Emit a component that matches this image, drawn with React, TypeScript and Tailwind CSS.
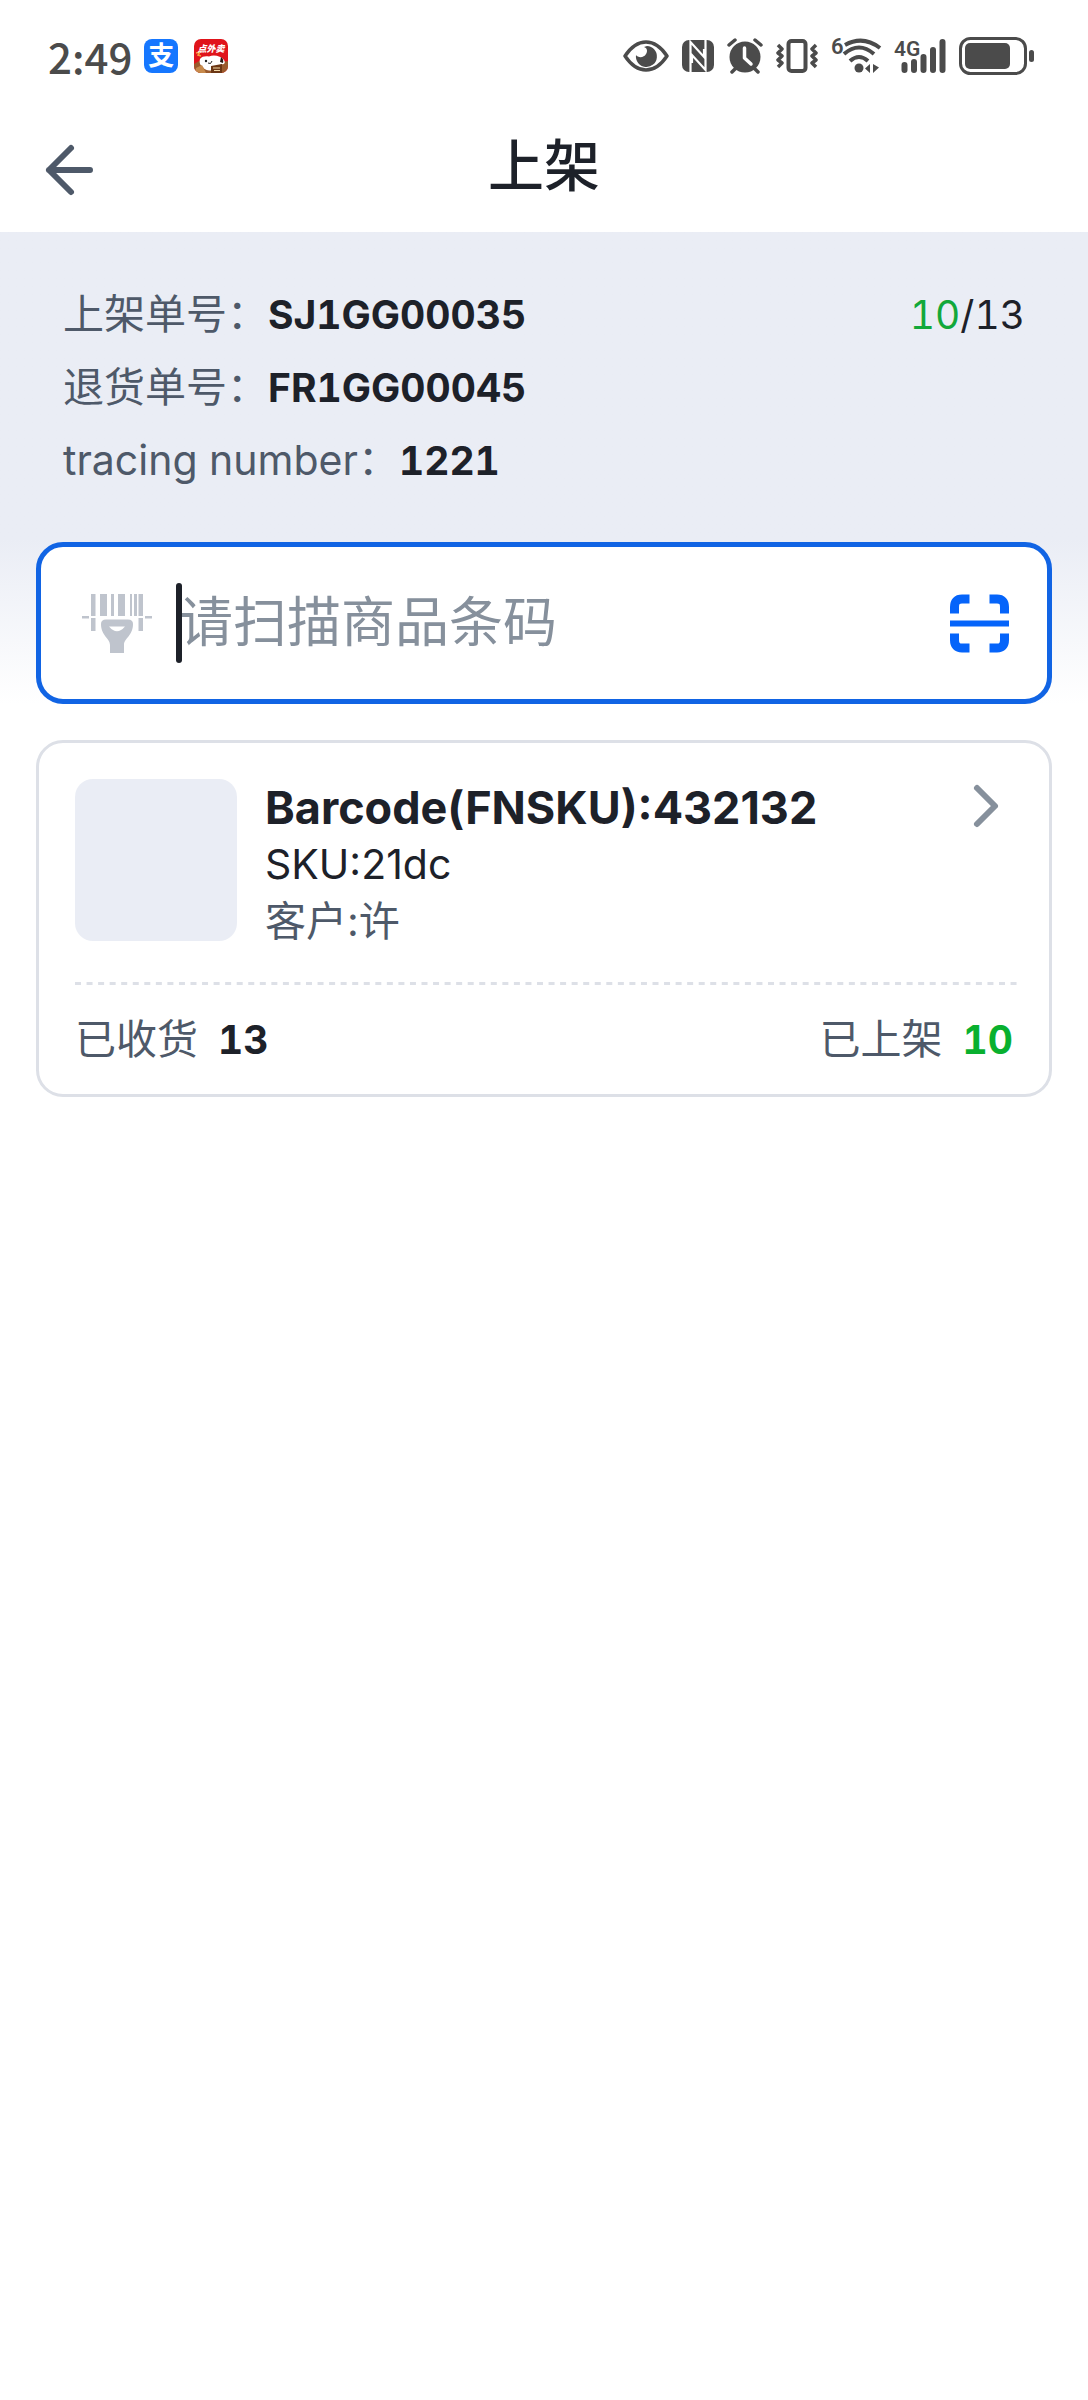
import React from 'react';

interface InfoRow {
    label: string;
    value: string;
}

interface PutawayItem {
    barcode: string;
    sku: string;
    customer: string;
    received: number;
    shelved: number;
}

const ORDER_INFO: InfoRow[] = [
    { label: '上架单号', value: 'SJ1GG00035' },
    { label: '退货单号', value: 'FR1GG00045' },
    { label: 'tracing number', value: '1221' },
];

const ITEMS: PutawayItem[] = [
    { barcode: '432132', sku: '21dc', customer: '许', received: 13, shelved: 10 },
];

// --- Status bar icons ---
const JdIcon = () => (
    <svg width="34" height="34" viewBox="0 0 34 34" aria-hidden="true">
        <defs>
            <clipPath id="jd-clip">
                <rect width="34" height="34" rx="7" />
            </clipPath>
        </defs>
        <g clipPath="url(#jd-clip)">
            <rect width="34" height="34" fill="#e0141b" />
            <path d="M0 25 5 22 12 26 23 24 34 22V34H0Z" fill="#9a5a2c" />
            <path d="M6 20C8 17 12 17 15 17.500C20 15.500 27 17 30 21C32 24 30 26 27 25L24 29C20 33 10 32 9 28C6 27 5 23 6 20Z" fill="#fff" />
            <path d="M2 14 6 13 4 16 7 17" fill="none" stroke="#f7a13a" strokeWidth="1.500" />
            <circle cx="12" cy="22" r="1.200" fill="#222" />
            <path d="M14 24Q17 26 18 22" fill="none" stroke="#222" strokeWidth="1" />
            <path d="M27 18Q30 20 29 24L26 23Z" fill="#2a1a14" />
            <path d="M17 27 28 25 28 34H17Z" fill="#6b3614" />
            <path d="M19 29H26M20 31.500H26" stroke="#f3d9a8" strokeWidth="1.200" />
            <path d="M2 29 8 26 12 34H1Z" fill="#c78a4c" />
        </g>
        <text x="17" y="13" textAnchor="middle" fontSize="9" fontWeight="900" fontStyle="italic" fill="#fff" fontFamily="'Noto Sans CJK SC', sans-serif">点外卖</text>
    </svg>
);

const EyeIcon = () => (
    <svg width="46" height="34" viewBox="0 0 46 34" aria-hidden="true">
        <path d="M2 17C8 8 15 3 23 3S38 8 44 17C38 26 31 31 23 31S8 26 2 17Z" fill="none" stroke="currentColor" strokeWidth="3.500" strokeLinejoin="round" />
        <path d="M24 7A10.500 10.500 0 1 1 13 16C15 19 21 19 23 15C25 12 24 9 21 8Z" fill="currentColor" />
    </svg>
);

const NfcIcon = () => (
    <svg width="32" height="34" viewBox="0 0 32 34" aria-hidden="true">
        <rect y="1" width="32" height="32" rx="7" fill="currentColor" />
        <path d="M8.500 33V3L22 18V10M23.500 1V31L10 16V24" fill="none" stroke="#fff" strokeWidth="2.200" />
    </svg>
);

const AlarmIcon = () => (
    <svg width="36" height="36" viewBox="0 0 36 36" aria-hidden="true">
        <circle cx="18" cy="19" r="15.500" fill="currentColor" />
        <path d="M2 7 8 2M34 7 28 2M5 34 9 30M31 34 27 30" stroke="currentColor" strokeWidth="3.500" strokeLinecap="round" />
        <path d="M17.500 10V20L24 26" fill="none" stroke="#fff" strokeWidth="3.500" strokeLinecap="round" strokeLinejoin="round" />
    </svg>
);

const VibrateIcon = () => (
    <svg width="42" height="36" viewBox="0 0 42 36" aria-hidden="true">
        <rect x="12.500" y="3" width="17" height="30" rx="3" fill="none" stroke="currentColor" strokeWidth="4" />
        <path d="M2 7 6 11 2 15 6 18 2 22 6 25 2 29M40 7 36 11 40 15 36 18 40 22 36 25 40 29" fill="none" stroke="currentColor" strokeWidth="3.500" strokeLinejoin="round" />
    </svg>
);

const WifiIcon = () => (
    <svg width="50" height="38" viewBox="0 0 50 38" className="overflow-visible" aria-hidden="true">
        <text x="0" y="17" fontSize="22" fontWeight="600" fill="currentColor" fontFamily="Roboto, sans-serif">6</text>
        <path d="M14 8Q32 -2 49 11M13 17Q28 4 43 17M19 24Q28 16 37 24" fill="none" stroke="currentColor" strokeWidth="4" />
        <circle cx="28" cy="31" r="4.500" fill="currentColor" />
        <path d="M39 27V36L34 31.500ZM42 27V36L48 30.500Z" fill="currentColor" />
    </svg>
);

const SignalIcon = () => (
    <svg width="52" height="38" viewBox="0 0 52 38" className="overflow-visible" aria-hidden="true">
        <text x="0" y="19" fontSize="21" fontWeight="600" fill="currentColor" fontFamily="Roboto, sans-serif">4G</text>
        <path d="M10.500 28V33M20 25V33M29.500 20V33M39 13V33M48.500 5V33" stroke="currentColor" strokeWidth="6" strokeLinecap="round" />
    </svg>
);

const BatteryIcon = () => (
    <svg width="76" height="38" viewBox="0 0 76 38" aria-hidden="true">
        <rect x="1.500" y="1.500" width="65" height="35" rx="10" fill="none" stroke="currentColor" strokeWidth="3" />
        <rect x="6" y="6" width="45" height="26" rx="5" fill="currentColor" />
        <rect x="70" y="13" width="5" height="12" rx="2.500" fill="currentColor" />
    </svg>
);

const StatusBar: React.FC = () => (
    <div className="flex h-28 items-center justify-between pl-12 pr-[53px] text-[#4b4b4b]">
        <div className="flex items-center">
            <span className="font-['Noto_Sans_CJK_SC',sans-serif] text-[42px] font-medium leading-[48px]">2:49</span>
            <span className="ml-3 flex size-[34px] items-center justify-center rounded-lg bg-[#1677ff] text-[26px] font-bold leading-[34px] text-white">支</span>
            <span className="ml-4">
                <JdIcon />
            </span>
        </div>
        <div className="flex items-center gap-[13px]">
            <EyeIcon />
            <NfcIcon />
            <AlarmIcon />
            <VibrateIcon />
            <WifiIcon />
            <SignalIcon />
            <BatteryIcon />
        </div>
    </div>
);

// --- Page icons ---
const BarcodeGunIcon = () => (
    <svg width="71" height="61" viewBox="0 0 71 61" fill="#bfc4cd" className="shrink-0" aria-hidden="true">
        <path d="M9 1h4.500v22H9zM18 1h7v22h-7zM29 1h3v22h-3zM36 1h7v22h-7zM48 1h2v22h-2zM52 1h3v22h-3zM56.500 1H61v22h-4.500zM9 25h4.500v13H9zM56.500 25H61v13h-4.500zM0 23h7v2.500H0zM63 23h7v2.500h-7z" />
        <path fillRule="evenodd" d="M24 26.500H46Q51 26.500 51 31C51 43 42 45 42 52V60H28V52C28 45 19 43 19 31Q19 26.500 24 26.500ZM27 33.500Q35 43 43 33.500Z" />
    </svg>
);

const ScanIcon = () => (
    <svg width="59" height="59" viewBox="0 0 59 59" fill="none" stroke="#0564fa" aria-hidden="true">
        <path d="M4.500 19.500V13Q4.500 5 12 5H19.500M39.500 5H47Q54.500 5 54.500 13V19.500M54.500 39.500V46Q54.500 54 47 54H39.500M19.500 54H12Q4.500 54 4.500 46V39.500" strokeWidth="9" />
        <path d="M0 29.500H59" strokeWidth="6" />
    </svg>
);

const NavBar: React.FC = () => (
    <header className="grid h-[120px] grid-cols-[1fr_auto_1fr] items-center px-[42px] pb-1">
        <button type="button" aria-label="返回" className="justify-self-start text-[#4e5969]">
            <svg width="54" height="54" viewBox="0 0 54 54" fill="none" stroke="currentColor" strokeWidth="6" strokeLinecap="round" strokeLinejoin="round" aria-hidden="true">
                <path d="M29 5 7 27 29 49M7 27H48" />
            </svg>
        </button>
        <h1 className="pb-2 text-[56px] font-medium leading-[72px]">上架</h1>
    </header>
);

const OrderSummary: React.FC<{ rows: InfoRow[]; done: number; total: number }> = ({ rows, done, total }) => (
    <div className="flex justify-between px-[27px] leading-[73px]">
        <dl>
            {rows.map((row) => (
                <div key={row.label} className="flex h-[73px] items-baseline">
                    <dt className="text-[41px] text-[#4e5969]">{row.label}：</dt>
                    <dd className="text-[39px] font-bold tabular-nums">{row.value}</dd>
                </div>
            ))}
        </dl>
        <p className="text-[39px] tabular-nums">
            <span className="text-[#12a83a]">{done}</span>/{total}
        </p>
    </div>
);

const ScanInput: React.FC = () => (
    <div className="mt-[45px] flex h-[162px] items-center rounded-[27px] border-[5px] border-[#1164e4] bg-white pl-[41px] pr-[38px]">
        <label htmlFor="barcode">
            <BarcodeGunIcon />
        </label>
        <div className="relative ml-[26px] min-w-0 flex-1">
            <input
                id="barcode"
                type="text"
                aria-label="商品条码"
                placeholder="请扫描商品条码"
                className="block h-20 w-full bg-transparent text-[54px] leading-[80px] outline-none placeholder:text-[#86909c]"
            />
            <span className="absolute inset-y-0 -left-[3px] w-[6px] rounded-full bg-[#1d2129]" />
        </div>
        <button type="button" aria-label="扫描">
            <ScanIcon />
        </button>
    </div>
);

const ItemCard: React.FC<{ item: PutawayItem }> = ({ item }) => (
    <article className="rounded-[27px] border-[3px] border-[#dde0e7] bg-white pb-[18px] pl-9 pr-8 pt-9">
        <div className="flex">
            <div className="size-[162px] shrink-0 rounded-[18px] bg-[#eaedf5]" />
            <div className="ml-[28px] min-w-0 flex-1 text-[41px] leading-[57px]">
                <h2 className="text-[45px] font-bold leading-[57px]">Barcode(FNSKU):{item.barcode}</h2>
                <p>SKU:{item.sku}</p>
                <p className="text-[#4e5969]">客户:{item.customer}</p>
            </div>
            <button type="button" aria-label="查看详情" className="mr-4 self-start text-[#86909c]">
                <svg width="30" height="54" viewBox="0 0 30 54" fill="none" stroke="currentColor" strokeWidth="6" strokeLinecap="round" strokeLinejoin="round" aria-hidden="true">
                    <path d="M6 9 24 27 6 45" />
                </svg>
            </button>
        </div>
        <svg className="mt-8 block h-[3px] w-full" aria-hidden="true">
            <line x1="0" y1="1.500" x2="100%" y2="1.500" stroke="#dde0e7" strokeWidth="3" strokeDasharray="6 5.550" />
        </svg>
        <dl className="mt-[18px] flex justify-between pr-1 leading-[73px]">
            <div className="flex h-[73px] items-baseline gap-5">
                <dt className="text-[41px] text-[#4e5969]">已收货</dt>
                <dd className="text-[39px] font-bold tabular-nums">{item.received}</dd>
            </div>
            <div className="flex h-[73px] items-baseline gap-5">
                <dt className="text-[41px] text-[#4e5969]">已上架</dt>
                <dd className="text-[39px] font-bold tabular-nums text-[#09b02f]">{item.shelved}</dd>
            </div>
        </dl>
    </article>
);

export default function App() {
    return (
        <div className="min-h-screen bg-white font-['Inter','Noto_Sans_CJK_SC',sans-serif] text-[#1d2129]">
            <StatusBar />
            <NavBar />
            <main>
                <section className="bg-linear-to-b from-[#eaedf5] from-65% to-white px-9 pt-[46px]">
                    <OrderSummary rows={ORDER_INFO} done={10} total={13} />
                    <ScanInput />
                </section>
                <section className="space-y-9 px-9 pt-9">
                    {ITEMS.map((item) => (
                        <ItemCard key={item.barcode} item={item} />
                    ))}
                </section>
            </main>
        </div>
    );
}
